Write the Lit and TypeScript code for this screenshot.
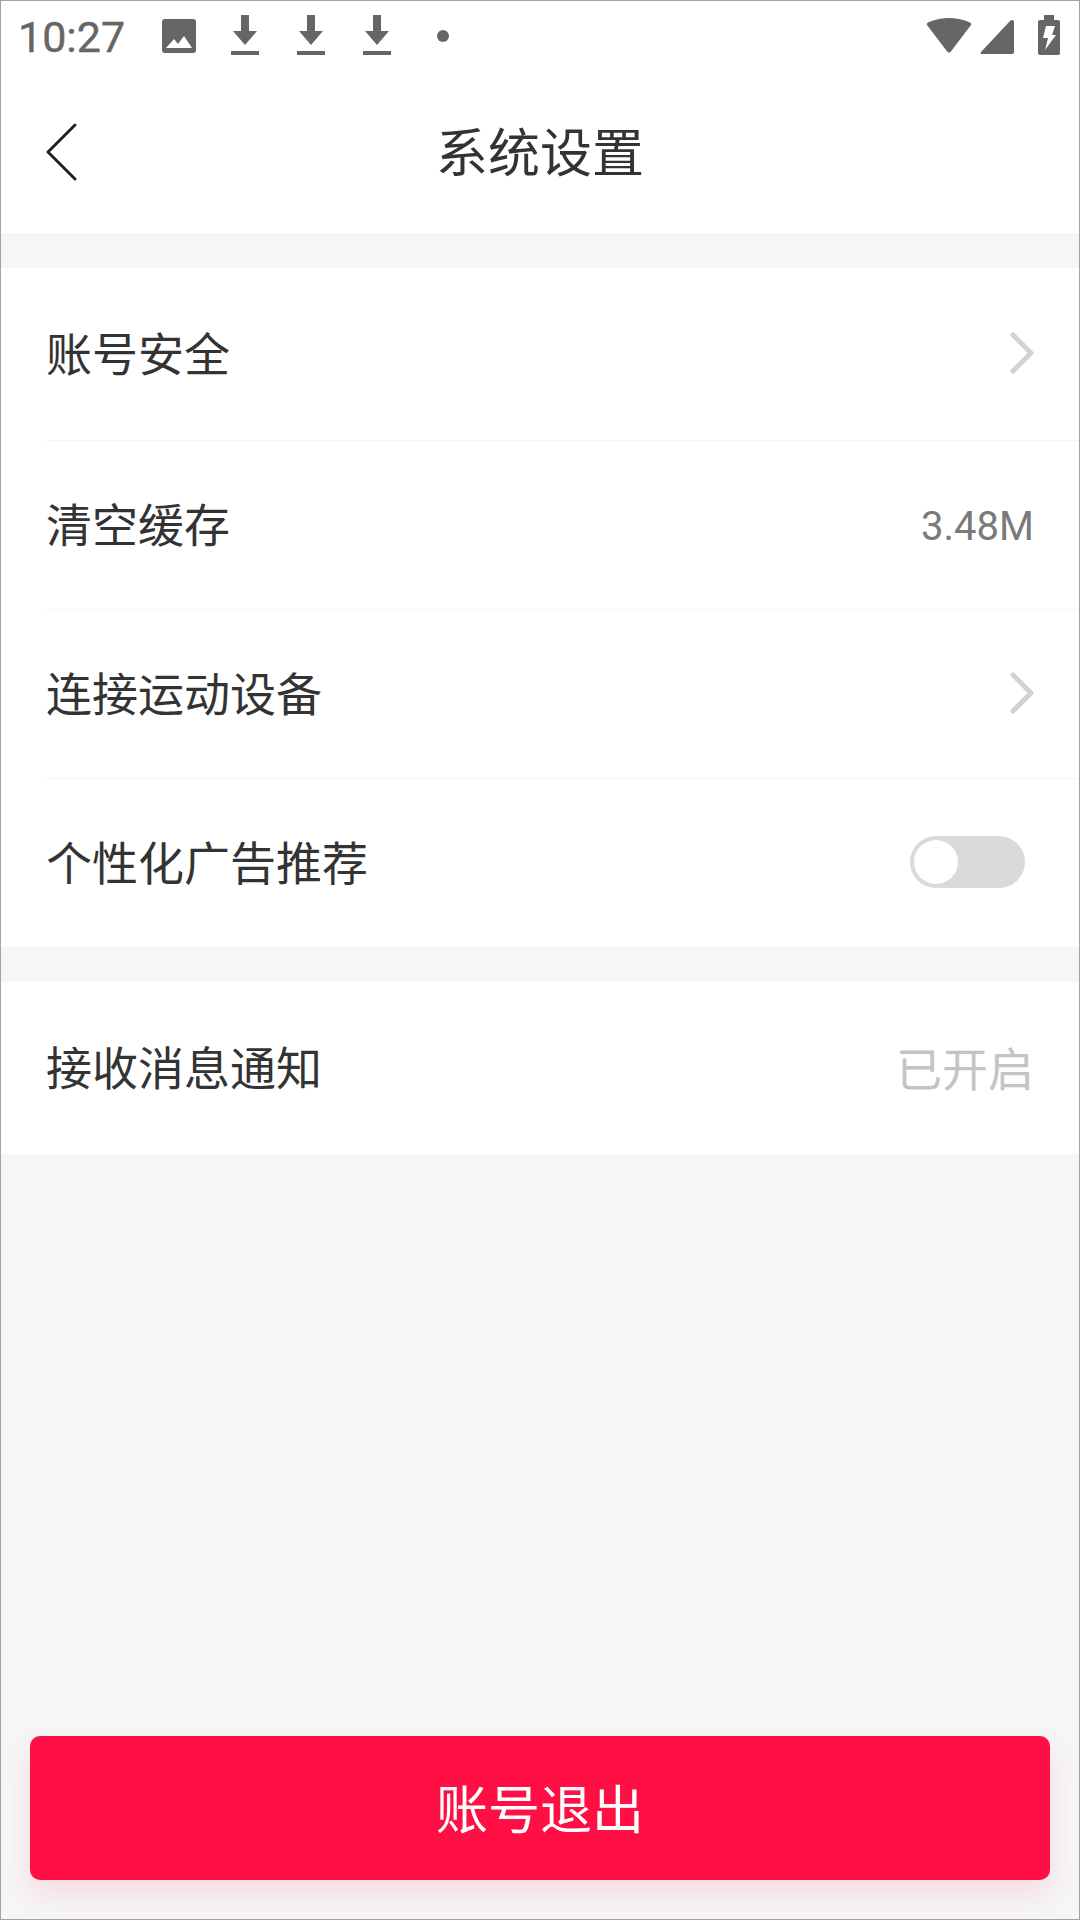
import { LitElement, html, css } from "lit";
import { customElement } from "lit/decorators.js";

const chevron = html`<svg class="chev" width="28" height="44" viewBox="0 0 28 44"><path d="M5 4 L23 22 L5 40" fill="none" stroke="#d2d2d2" stroke-width="5" stroke-linecap="round" stroke-linejoin="round"/></svg>`;
const download = html`<svg class="dl" width="30" height="42" viewBox="0 0 30 42"><path d="M11 0 H19 V16 H27 L15 30 L3 16 H11 Z M1 36 H29 V40 H1 Z" fill="#666"/></svg>`;

@customElement("app-root")
export class AppRoot extends LitElement {
  static styles = css`
    :host { display: block; }
    .frame {
      box-sizing: border-box; width: 1080px; height: 1920px;
      border: 1px solid #a3a3a3;
      background: #f6f6f6;
      display: flex; flex-direction: column;
      font-family: "Noto Sans CJK SC", "Noto Sans", sans-serif;
      color: #333;
    }
    .top { background: #fff; height: 232px; display: flex; flex-direction: column; }
    .status { height: 70px; display: flex; align-items: center; padding: 0 19px 0 17px; }
    .time { font: 43px/1 Roboto, sans-serif; color: #666; width: 144px; margin-top: 2px; -webkit-text-stroke: 0.4px #666; }
    .notifs { display: flex; align-items: center; }
    .img { margin-right: 34px; }
    .dl { margin-right: 36px; }
    .dot { width: 12px; height: 12px; border-radius: 50%; background: #666; margin-left: 9px; }
    .sys { margin-left: auto; display: flex; align-items: center; }
    .wifi { margin-right: 8px; margin-top: -2px; }
    .signal { margin-right: 24px; margin-top: 2px; }
    .batt { margin-top: -2px; }
    .nav { flex: 1; position: relative; display: flex; align-items: center; justify-content: center; padding-bottom: 4px; }
    .back { position: absolute; left: 45px; top: 51px; }
    .title { font-size: 52px; line-height: 1; color: #333; }
    .group { background: #fff; margin-top: 35px; }
    .row { height: 168px; display: flex; align-items: center; justify-content: space-between; margin-left: 45px; padding-right: 44px; border-bottom: 1px solid #f5f5f5; font-size: 46px; }
    .row.first { height: 172px; }
    .row.last { border-bottom: 0; height: 168px; }
    .row.solo { height: 172px; padding-right: 45px; }
    .label { line-height: 1; color: #333; margin-bottom: 6px; }
    .chev { margin-right: -1px; margin-bottom: 2px; }
    .size { font: 40px/1 Roboto, sans-serif; color: #7a7a7a; margin-right: 1px; margin-top: 4px; }
    .on { font-size: 46px; line-height: 1; color: #c4c4c4; margin-bottom: 4px; }
    .toggle { box-sizing: border-box; width: 115px; height: 52px; border-radius: 26px; background: #dadada; padding: 4px; margin-right: 10px; margin-bottom: 2px; }
    .knob { width: 44px; height: 44px; border-radius: 50%; background: #fff; }
    .spacer { flex: 1; }
    .foot { padding: 0 29px 39px; }
    .btn { height: 144px; box-sizing: border-box; padding-bottom: 4px; border-radius: 10px; background: #ff0f43; color: #fff; font-size: 52px; display: flex; align-items: center; justify-content: center; box-shadow: 0 14px 30px rgba(255, 15, 67, 0.12); }
  `;

  render() {
    return html`<div class="frame">
      <div class="top">
        <div class="status">
          <span class="time">10:27</span>
          <div class="notifs">
            <svg class="img" width="34" height="34" viewBox="0 0 34 34"><path fill-rule="evenodd" d="M3 0 H31 A3 3 0 0 1 34 3 V31 A3 3 0 0 1 31 34 H3 A3 3 0 0 1 0 31 V3 A3 3 0 0 1 3 0 Z M4 29 H30 L22 17 L16 25 L12 20 Z" fill="#666"/></svg>
            ${download}${download}${download}
            <span class="dot"></span>
          </div>
          <div class="sys">
            <svg class="wifi" width="46" height="36" viewBox="0 0 46 36"><path d="M1 8 Q0 6 3 5 Q23 -3 43 5 Q46 6 45 8 L24.500 35 Q23 36 21.500 35 Z" fill="#666"/></svg>
            <svg class="signal" width="34" height="34" viewBox="0 0 34 34"><path d="M32 0 Q34 0 34 2 V32 Q34 34 32 34 H2 Q0 34 1 32 L30 1 Q31 0 32 0 Z" fill="#666"/></svg>
            <svg class="batt" width="22" height="40" viewBox="0 0 22 40"><path fill-rule="evenodd" d="M6 0 H16 V5 H20 Q22 5 22 7 V38 Q22 40 20 40 H2 Q0 40 0 38 V7 Q0 5 2 5 H6 Z M8 11 H17 L14 20 H18 L7 35 L10 23 H5 Z" fill="#666"/></svg>
          </div>
        </div>
        <div class="nav">
          <svg class="back" width="34" height="60" viewBox="0 0 34 60"><path d="M29 3 L2 30 L29 57" fill="none" stroke="#222" stroke-width="3" stroke-linecap="round" stroke-linejoin="round"/></svg>
          <span class="title">系统设置</span>
        </div>
      </div>
      <div class="group">
        <div class="row first"><span class="label">账号安全</span>${chevron}</div>
        <div class="row"><span class="label">清空缓存</span><span class="size">3.48M</span></div>
        <div class="row"><span class="label">连接运动设备</span>${chevron}</div>
        <div class="row last"><span class="label">个性化广告推荐</span><div class="toggle"><div class="knob"></div></div></div>
      </div>
      <div class="group">
        <div class="row solo last"><span class="label">接收消息通知</span><span class="on">已开启</span></div>
      </div>
      <div class="spacer"></div>
      <div class="foot"><div class="btn">账号退出</div></div>
    </div>`;
  }
}
